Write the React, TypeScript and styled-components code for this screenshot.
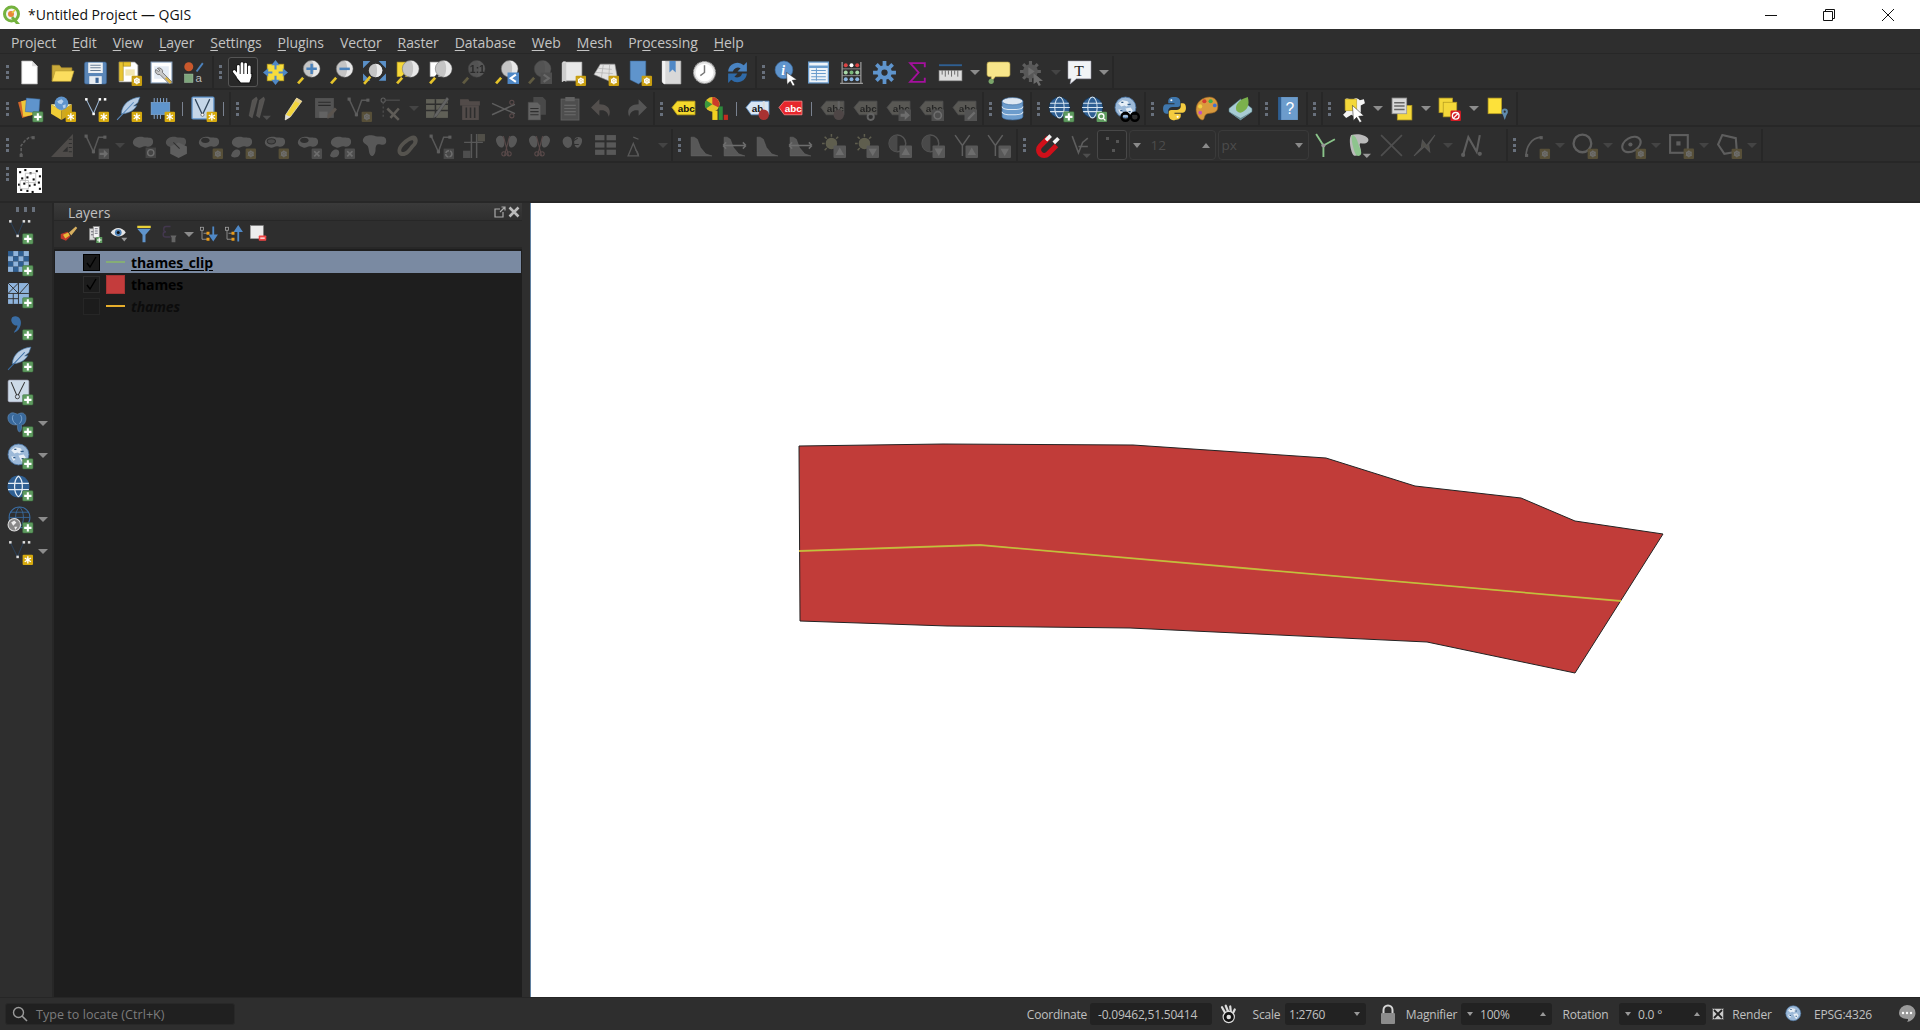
import React, { ReactNode } from "react";
import styled, { createGlobalStyle } from "styled-components";

const GlobalStyle = createGlobalStyle`
  html, body {
    margin: 0;
    padding: 0;
    background: #2e2e2e;
    overflow: hidden;
  }
  body {
    font-family: "Open Sans", "Liberation Sans", sans-serif;
  }
`;

const Window = styled.div`
  width: 1920px;
  height: 1030px;
  display: flex;
  flex-direction: column;
`;

const TitleBar = styled.div`
  height: 29px;
  background: #fff;
  display: flex;
  align-items: center;
  padding: 0 3px 0 2px;
  flex: none;
`;

const TitleText = styled.div`
  font-size: 14px;
  color: #111;
  margin-left: 6px;
  flex: 1;
`;

const WinButton = styled.div`
  width: 58.5px;
  height: 29px;
  display: flex;
  align-items: center;
  justify-content: center;
`;

const MenuBar = styled.div`
  height: 25px;
  flex: none;
  display: flex;
  align-items: center;
  padding: 2px 0 0 3px;
  background: #2e2e2e;
  border-bottom: 1px solid #272727;
  box-sizing: border-box;
`;

const MenuItem = styled.div`
  font-size: 14px;
  letter-spacing: -0.08px;
  color: #c4c4c4;
  padding: 0 8px;
  u {
    text-underline-offset: 2px;
  }
`;

const ToolRow = styled.div<{ $h: number }>`
  height: ${(p) => p.$h}px;
  flex: none;
  box-sizing: border-box;
  display: flex;
  align-items: stretch;
  padding-top: 2px;
  background: #2e2e2e;
  border-bottom: 2px solid #272727;
`;

const Group = styled.div`
  display: flex;
  align-items: center;
  padding-right: 1px;
  border-right: 2px solid #272727;
`;

const Handle = styled.div`
  width: 7px;
  margin-left: 5px;
  height: 18px;
  display: flex;
  flex-direction: column;
  justify-content: space-between;
  padding: 2px 0;
  box-sizing: border-box;
  i {
    display: block;
    width: 3px;
    height: 3px;
    background: #68707c;
  }
`;

const Pad = styled.div<{ $w?: number }>`
  width: ${(p) => p.$w ?? 1}px;
  flex: none;
`;

const ToolButton = styled.div<{ $dim?: boolean; $on?: boolean }>`
  width: ${(p) => (p.$on ? 30 : 33)}px;
  height: 30px;
  margin: 0 ${(p) => (p.$on ? 1.5 : 0)}px;
  box-sizing: border-box;
  flex: none;
  display: flex;
  align-items: center;
  justify-content: center;
  ${(p) => p.$on && "background: #282828; border: 1px solid #555; border-radius: 3px;"}
  svg {
    overflow: visible;
    ${(p) => p.$dim && "opacity: 0.3; filter: saturate(0.55);"}
  }
`;

const Drop = styled.div<{ $dim?: boolean; $blank?: boolean; $w?: number }>`
  width: ${(p) => p.$w ?? 15}px;
  flex: none;
  display: flex;
  justify-content: center;
  &::after {
    content: "";
    display: ${(p) => (p.$blank ? "none" : "block")};
    border-left: 5px solid transparent;
    border-right: 5px solid transparent;
    border-top: 5px solid ${(p) => (p.$dim ? "#444" : "#8c8c8c")};
  }
`;

const ThinSep = styled.div`
  width: 8.5px;
  height: 14px;
  flex: none;
  display: flex;
  justify-content: center;
  &::after {
    content: "";
    width: 1px;
    background: #7a8290;
  }
`;

const SnapBox = styled.div`
  width: 30px;
  height: 30px;
  margin-left: 0.5px;
  box-sizing: border-box;
  border: 1px solid #484848;
  border-radius: 3px;
  background: #2a2a2a;
  position: relative;
`;

const SnapDot = styled.i<{ $x: number; $y: number }>`
  position: absolute;
  left: ${(p) => p.$x}px;
  top: ${(p) => p.$y}px;
  width: 3px;
  height: 3px;
  background: #555;
`;

const SpinBox = styled.div<{ $w: number; $ml: number }>`
  width: ${(p) => p.$w}px;
  height: 30px;
  margin-left: ${(p) => p.$ml}px;
  box-sizing: border-box;
  border: 1px solid #3a3a3a;
  border-radius: 4px;
  display: flex;
  align-items: center;
  justify-content: space-between;
  padding: 0 5px 0 3px;
  font-size: 13.5px;
  color: #4c4c4c;
  flex: none;
`;

const SpinValue = styled.span<{ $pl: number }>`
  flex: 1;
  padding-left: ${(p) => p.$pl}px;
`;

const Tri = styled.span<{ $up?: boolean }>`
  display: block;
  border-left: 4px solid transparent;
  border-right: 4px solid transparent;
  ${(p) =>
    p.$up
      ? "border-bottom: 5px solid #8a8a8a;"
      : "border-top: 5px solid #8a8a8a;"}
`;

const Main = styled.div`
  flex: 1;
  min-height: 0;
  display: flex;
`;

const SideBar = styled.div`
  width: 54px;
  flex: none;
  padding-top: 2px;
  box-sizing: border-box;
  background: #2e2e2e;
  border-right: 2px solid #272727;
  display: flex;
  flex-direction: column;
`;

const SideHandle = styled.div`
  height: 7px;
  margin-bottom: 2px;
  padding-left: 16px;
  display: flex;
  gap: 5px;
  i {
    display: block;
    width: 3px;
    height: 5px;
    margin-top: 2px;
    background: #68707c;
  }
`;

const SideRow = styled.div`
  height: 32.2px;
  display: flex;
  align-items: center;
  padding-left: 3px;
  flex: none;
`;

const SideIcon = styled.div`
  width: 32px;
  display: flex;
  justify-content: center;
  svg {
    overflow: visible;
  }
`;

const Panel = styled.div`
  width: 468px;
  flex: none;
  display: flex;
  flex-direction: column;
  background: #2e2e2e;
`;

const PanelTitle = styled.div`
  height: 18px;
  box-sizing: border-box;
  display: flex;
  align-items: center;
  gap: 2px;
  padding: 1px 2px 0 14px;
  background: linear-gradient(#3a3a3a, #2f2f2f);
  border-bottom: 1px solid #272727;
  font-size: 14px;
  color: #c0c0c0;
`;

const PanelName = styled.div`
  flex: 1;
`;

const PanelBar = styled.div`
  height: 28px;
  display: flex;
  align-items: center;
  padding-left: 2px;
  flex: none;
  border-bottom: 2px solid #272727;
  box-sizing: border-box;
`;

const PanelTool = styled.div<{ $dim?: boolean; $w?: number }>`
  width: ${(p) => p.$w ?? 25}px;
  display: flex;
  justify-content: center;
  flex: none;
  svg {
    overflow: visible;
    ${(p) => p.$dim && "opacity: 0.35;"}
  }
`;

const Tree = styled.div`
  flex: 1;
  background: #1e1e1e;
  padding: 2px 1px 0;
`;

const LayerRow = styled.div<{ $on?: boolean }>`
  height: 22px;
  display: flex;
  align-items: center;
  padding-left: 28px;
  background: ${(p) => (p.$on ? "#7a8aa2" : "transparent")};
`;

const Check = styled.div<{ $on?: boolean; $off?: boolean }>`
  width: 17px;
  height: 17px;
  box-sizing: border-box;
  display: flex;
  align-items: center;
  justify-content: center;
  border: 1px solid ${(p) => (p.$on ? "#000" : p.$off ? "#262626" : "#2c2c2c")};
  background: ${(p) => (p.$on ? "#1a1a1a" : "#1c1c1c")};
`;

const Symbol = styled.div`
  width: 19px;
  height: 19px;
  margin: 0 6px;
  display: flex;
  align-items: center;
  flex: none;
`;

const LineSwatch = styled.div<{ $color: string }>`
  width: 100%;
  height: 2px;
  background: ${(p) => p.$color};
`;

const FillSwatch = styled.div`
  width: 100%;
  height: 100%;
  box-sizing: border-box;
  background: #c43c3c;
  border: 1px solid #a83434;
`;

const LayerName = styled.div<{ $on?: boolean; $off?: boolean }>`
  font-size: 14px;
  font-weight: 700;
  color: ${(p) => (p.$off ? "#0c0c0c" : "#000")};
  font-style: ${(p) => (p.$off ? "italic" : "normal")};
  text-decoration: ${(p) => (p.$on ? "underline" : "none")};
  text-underline-offset: 2px;
  letter-spacing: -0.1px;
`;

const Gutter = styled.div`
  width: 8px;
  flex: none;
  background: #2e2e2e;
`;

const MapCanvas = styled.div`
  flex: 1;
  background: #fff;
  border-left: 1px solid #5f7f9f;
  display: flex;
  svg {
    display: block;
  }
`;

const StatusBar = styled.div`
  height: 33px;
  flex: none;
  display: flex;
  align-items: center;
  padding-left: 5px;
  background: #2e2e2e;
  border-top: 1px solid #262626;
  box-sizing: border-box;
  font-size: 12px;
  letter-spacing: -0.2px;
  color: #c0c0c0;
`;

const Locator = styled.div`
  width: 230px;
  height: 22px;
  flex: none;
  display: flex;
  align-items: center;
  gap: 8px;
  padding-left: 6px;
  box-sizing: border-box;
  background: #202020;
  border: 1px solid #282828;
  border-radius: 3px;
  color: #7c7c7c;
  font-size: 12.5px;
  letter-spacing: 0.05px;
`;

const Spacer = styled.div`
  flex: 1;
`;

const StatusLabel = styled.div<{ $w: number }>`
  width: ${(p) => p.$w}px;
  flex: none;
  text-align: center;
  white-space: nowrap;
`;

const StatusField = styled.div<{ $w: number; $pad?: number }>`
  width: ${(p) => p.$w}px;
  height: 22px;
  flex: none;
  box-sizing: border-box;
  padding: 0 6px 0 ${(p) => p.$pad ?? 6}px;
  display: flex;
  align-items: center;
  justify-content: space-between;
  background: #222;
  border-radius: 3px;
  white-space: nowrap;
`;

const FieldValue = styled.span`
  flex: 1;
  padding-left: 7px;
`;

const StatusIcon = styled.div<{ $w: number; $pl?: number; $pr?: number }>`
  width: ${(p) => p.$w}px;
  flex: none;
  box-sizing: border-box;
  padding: 0 ${(p) => p.$pr ?? 0}px 0 ${(p) => p.$pl ?? 0}px;
  display: flex;
  justify-content: center;
  align-items: center;
`;

const SmallTri = styled.span<{ $up?: boolean }>`
  display: block;
  flex: none;
  border-left: 3px solid transparent;
  border-right: 3px solid transparent;
  ${(p) =>
    p.$up
      ? "border-bottom: 4px solid #999;"
      : "border-top: 4px solid #999;"}
`;

/* icon parts */
const star = (
  <g>
    <rect x="15" y="15" width="10" height="10" rx="1" fill="#d6aa0e" />
    <path d="M20 16.5v7M17 18.2l6 3.6M23 18.2l-6 3.6" stroke="#fff" strokeWidth="1.3" />
  </g>
);
const gearB = (
  <g>
    <rect x="15" y="15" width="10" height="10" rx="1" fill="#c89e10" />
    <circle cx="20" cy="20" r="2.2" fill="none" stroke="#fff" strokeWidth="1.2" />
    <path d="M20 16.5v7M17 18.2l6 3.6M23 18.2l-6 3.6" stroke="#fff" strokeWidth="0.8" />
  </g>
);
const plus = (
  <g>
    <rect x="15" y="15" width="10" height="10" rx="1" fill="#5f9c60" stroke="#3a6a3c" strokeWidth=".5" />
    <path d="M20 16.5v7M16.5 20h7" stroke="#fff" strokeWidth="2" />
  </g>
);
const crossB = (
  <g>
    <rect x="15" y="15" width="10" height="10" rx="1" fill="#999" />
    <path d="M17.5 17.5l5 5M22.5 17.5l-5 5" stroke="#fff" strokeWidth="1.6" />
  </g>
);
const blob = "M2 8c1-4 7-5 10-4s8-1 9 3-2 7-6 6-5 2-8 1-6-3-5-6z";
const lens = (extra?: ReactNode, fill = "#c4c4c4", hi = "#e8e8e8") => (
  <>
    <path d="M2 22.5l5-5.5" stroke="#e6c42a" strokeWidth="2.6" />
    <path d="M7 17l2.5-2.7" stroke="#333" strokeWidth="2.6" />
    <circle cx="15" cy="8.5" r="8" fill={fill} stroke="#777" strokeWidth=".6" />
    <path d="M15 .8a7.7 7.7 0 0 1 0 15.4c3-2 3.5-13 0-15.4z" fill={hi} />
    {extra}
  </>
);
const corners = (c: string) => (
  <path d="M1 1h7L1 8zM23 1v7l-7-7zM1 20v-7l7 7zM23 20h-7l7-7z" fill={c} />
);
const globe = (body = "#2f5f92", line = "#d8e6f2", hole = "#17324d") => (
  <>
    <circle cx="11" cy="11" r="10" fill={body} stroke={hole} strokeWidth=".8" />
    <ellipse cx="11" cy="11" rx="4.5" ry="10" fill="none" stroke={line} strokeWidth="1" />
    <path d="M2 7h18M1 11h20M2 15h18" stroke={line} strokeWidth="1" />
  </>
);
const mottled = (
  <>
    <circle cx="11" cy="11" r="10" fill="#9cb9d8" stroke="#4d78a8" strokeWidth=".8" />
    <path d="M4 7l4-3 5 1 2 3-3 2-2-1-3 1zM11 12l5-1 2 3-3 5-2-3zM4 13l3 0 1 3-2 1z" fill="#e6eef6" />
    <path d="M7 6h2M13 8h3M6 14h2M14 15h2" stroke="#2f5a88" strokeWidth="1.2" />
  </>
);
const binoculars = (
  <g>
    <circle cx="11" cy="20" r="3.8" fill="none" stroke="#000" strokeWidth="2.4" />
    <circle cx="20" cy="20" r="3.8" fill="none" stroke="#000" strokeWidth="2.4" />
    <path d="M9 15h4l1 3h3l1-3h4l1 3H8z" fill="#000" />
  </g>
);
const vertexEdge = (c: string, dot: string) => (
  <>
    <path d="M3 3l7 14 6-14" fill="none" stroke={c} strokeWidth="1" />
    <rect x="2" y="2" width="2.4" height="2.4" fill={dot} />
    <rect x="9" y="16" width="2.4" height="2.4" fill={dot} />
    <rect x="15" y="2" width="2.4" height="2.4" fill={dot} />
    <rect x="20" y="2" width="2.4" height="2.4" fill={dot} />
  </>
);
const polyline = (
  <>
    <path d="M3 3l7 15 5-14h7" fill="none" stroke="#bbb" strokeWidth="1.4" />
    <rect x="1.5" y="1.5" width="3" height="3" fill="#ccc" />
    <rect x="8.5" y="16.5" width="3" height="3" fill="#ccc" />
    <rect x="19.5" y="2.5" width="3" height="3" fill="#ccc" />
  </>
);
const feather = (c: string, v: string) => (
  <>
    <path d="M23 1C14 2 6 7 5 17c5 0 12-2 15-8l-3 .5 4-3z" fill={c} stroke="#3d6d9c" strokeWidth=".6" />
    <path d="M1 23L17 6" stroke={v} strokeWidth="1" />
  </>
);
const label = (fill: string, ink: string, edge: string, t = "abc") => (
  <>
    <path d="M1 11l5-6h17v13H6z" fill={fill} stroke={edge} strokeWidth=".8" />
    <text x="6.5" y="15" fontSize="9.5" fontWeight="700" fontFamily="Liberation Sans" fill={ink}>
      {t}
    </text>
  </>
);
const dimLabel = (extra: ReactNode) => (
  <>
    {label("#bfbba0", "#111", "#999")}
    {extra}
  </>
);
const hist = (
  <path d="M2 22V4h3l3 2 3 8 5 6 6 2z" fill="#bbb" stroke="#ddd" strokeWidth=".5" />
);
const histArrow = (
  <>
    {hist}
    <path d="M1 12h22M1 12l3-3M1 12l3 3M23 12l-3-3M23 12l-3 3" stroke="#fff" strokeWidth="1.4" fill="none" />
  </>
);
const bright = (up: boolean) => (
  <>
    <circle cx="10" cy="10" r="5.5" fill="#d8d070" />
    <path d="M10 1v2.5M1 10h2.5M3.5 3.5l2 2M16.5 3.5l-2 2M3.5 16.5l2-2" stroke="#d8d070" strokeWidth="1.4" />
    <rect x="12" y="12" width="12" height="12" rx="1" fill="#bbb" />
    <path d={up ? "M18 14l4 7h-8z" : "M18 22l4-7h-8z"} fill="#fff" />
  </>
);
const contrast = (up: boolean) => (
  <>
    <circle cx="10" cy="10" r="8" fill="#2e2e2e" stroke="#aaa" strokeWidth="1.4" />
    <path d="M10 2a8 8 0 0 0 0 16z" fill="#888" />
    <rect x="12" y="12" width="12" height="12" rx="1" fill="#bbb" />
    <path d={up ? "M18 14l4 7h-8z" : "M18 22l4-7h-8z"} fill="#fff" />
  </>
);
const gamma = (up: boolean) => (
  <>
    <path d="M2 2l7 10v10M16 2l-7 10" fill="none" stroke="#ccc" strokeWidth="1.4" />
    <rect x="12" y="12" width="12" height="12" rx="1" fill="#bbb" />
    <path d={up ? "M18 14l4 7h-8z" : "M18 22l4-7h-8z"} fill="#fff" />
  </>
);
const kidney = (
  <>
    <path d="M3 4c3-3 7-1 7 3s0 7-3 7-7-7-4-10zM21 4c-3-3-7-1-7 3s0 7 3 7 7-7 4-10z" fill="#bbb" />
    <path d="M9 3l5 19M15 3l-5 19" stroke="#e08080" strokeWidth="1" />
    <circle cx="9.5" cy="20" r="2" fill="none" stroke="#e08080" />
    <circle cx="14.5" cy="20" r="2" fill="none" stroke="#e08080" />
  </>
);

const icons: Record<string, ReactNode> = {
  new: (
    <>
      <path d="M4.5 1h10l5 5v17h-15z" fill="#fff" stroke="#b5b5b5" strokeWidth=".7" />
      <path d="M14.5 1v5h5z" fill="#ddd" />
    </>
  ),
  open: (
    <>
      <path d="M2 20V5h7l2 2.5h10V12H5z" fill="#c9a93a" stroke="#a98c2c" strokeWidth=".6" />
      <path d="M2 20.5l3-10h18l-3 10z" fill="#fbdd5e" stroke="#bba032" strokeWidth=".6" />
    </>
  ),
  save: (
    <>
      <rect x="1.5" y="2" width="21" height="21" rx="1.5" fill="#5a86b8" stroke="#3c6494" strokeWidth=".6" />
      <rect x="5" y="2.5" width="14" height="10" fill="#eef1f4" />
      <path d="M7 5h10M7 7.5h10M7 10h10" stroke="#6a7f96" strokeWidth="1" />
      <rect x="6" y="15.5" width="12" height="7.5" fill="#e8edf2" />
      <rect x="12" y="17" width="3" height="5" fill="#3c6494" />
    </>
  ),
  saveAs: (
    <>
      <path d="M3 2h15l3 3v16H3z" fill="#fff" stroke="#999" strokeWidth=".7" />
      <path d="M3 2h4v18H3zM7 2h7v4H7z" fill="#e8c430" stroke="#9c8420" strokeWidth=".5" />
      <path d="M9 9h9v6H9z" fill="#f2e6b0" />
      {gearB}
    </>
  ),
  props: (
    <>
      <rect x="2" y="2" width="20" height="20" fill="#fff" stroke="#8ea6c4" strokeWidth="1" />
      <path d="M5 6h14v12H5z" fill="#e4ebf4" />
      <path d="M8 8a3.5 3.5 0 0 1 5 4l9 9-2.5 2-9-9a3.5 3.5 0 0 1-4-5l2.5 2 1.5-1z" fill="#c8c8c8" stroke="#555" strokeWidth=".7" />
      <path d="M16 17l5 5" stroke="#d6b040" strokeWidth="2.2" />
    </>
  ),
  style: (
    <>
      <circle cx="6.5" cy="6.5" r="4.3" fill="#c9582c" />
      <path d="M14 11l6-8" stroke="#4c82bc" strokeWidth="1.8" />
      <rect x="2.5" y="13.5" width="8" height="8" fill="#7ea67c" stroke="#aac8a8" strokeWidth=".5" />
      <text x="13" y="21" fontSize="11" fontFamily="Liberation Sans" fill="#bbb">
        a
      </text>
    </>
  ),
  hand: (
    <>
      <g strokeLinecap="round" fill="none" stroke="#111" strokeWidth="4">
        <path d="M8 14V6M11.5 12V3.5M15 12V4M18.5 13V6.5M8 15L4 11" />
      </g>
      <path d="M6 13h15v3l-2 6H10l-4-5z" fill="#fff" stroke="#111" />
      <g strokeLinecap="round" fill="none" stroke="#fff" strokeWidth="2.6">
        <path d="M8 15V6M11.5 15V3.5M15 15V4M18.5 15V6.5M8 16L4 11" />
      </g>
    </>
  ),
  panSel: (
    <>
      <rect x="4" y="4" width="16" height="16" fill="#f6dc3c" stroke="#b39a20" strokeWidth=".6" />
      <path d="M12 0l4 5h-3v4h-2V5H8zM12 24l4-5h-3v-4h-2v4H8zM0 12l5-4v3h4v2H5v3zM24 12l-5-4v3h-4v2h4v3z" fill="#4f88c6" />
    </>
  ),
  zoomIn: lens(<path d="M15 3.5v10M10 8.5h10" stroke="#4a82bc" strokeWidth="2.4" />),
  zoomOut: lens(<path d="M10 8.5h10" stroke="#4a82bc" strokeWidth="2.4" />),
  zoomFull: (
    <>
      {corners("#5a90c8")}
      <circle cx="13" cy="10" r="6.5" fill="#c4c4c4" />
      <path d="M13 3.5a6.5 6.5 0 0 1 0 13c2-2 2-11 0-13z" fill="#eaeaea" />
      <path d="M2 23l6-7" stroke="#e6c42a" strokeWidth="2.5" />
    </>
  ),
  zoomSel: (
    <>
      <rect x="2" y="2" width="10" height="14" fill="#f6d83a" stroke="#b89c20" strokeWidth=".6" />
      {lens()}
    </>
  ),
  zoomLayer: (
    <>
      <rect x="2" y="2" width="10" height="14" fill="#fff" stroke="#aaa" strokeWidth=".6" />
      {lens()}
    </>
  ),
  native: lens(
    <text x="8.5" y="12.5" fontSize="10" fontWeight="700" fontFamily="Liberation Sans" fill="#222">
      1:1
    </text>,
    "#aaa",
    "#bbb"
  ),
  last: (
    <>
      {lens()}
      <rect x="13" y="12" width="11" height="11" fill="#4f88c6" />
      <path d="M21 14l-5 3.5 5 3.5" stroke="#fff" strokeWidth="2" fill="none" />
    </>
  ),
  next: (
    <>
      {lens(undefined, "#aaa", "#bbb")}
      <rect x="13" y="12" width="11" height="11" fill="#999" />
      <path d="M16 14l5 3.5-5 3.5" stroke="#eee" strokeWidth="2" fill="none" />
    </>
  ),
  newMap: (
    <>
      <path d="M2 3c0-1.5 3-2 4-1h15v18H6c-2-1-3 0-4 1z" fill="#e8e8e8" stroke="#aaa" strokeWidth=".6" />
      <path d="M2 3v18c1-1 3-1 4 0V2z" fill="#ccc" />
      {gearB}
    </>
  ),
  new3d: (
    <>
      <path d="M1 14L7 4h14l2 11-8 5z" fill="#e2e2e2" stroke="#999" strokeWidth=".6" />
      <path d="M5 8l13 1M3 12l16 1M10 4l-2 13M16 4l-1 15" stroke="#aaa" strokeWidth=".6" />
      {gearB}
    </>
  ),
  newBm: (
    <>
      <path d="M4 1h15v17l-7 5-8-4z" fill="#5f94cc" stroke="#3c6ca0" strokeWidth=".5" />
      {gearB}
    </>
  ),
  showBm: (
    <>
      <path d="M3 1h18v22H5c-1.5-1-2-2-2-3z" fill="#d8d8d8" stroke="#aaa" strokeWidth=".6" />
      <path d="M3 1h3v22c-2 0-3-1-3-3z" fill="#f2f2f2" />
      <path d="M10 1h6v11l-3-3-3 3z" fill="#4f88c6" />
    </>
  ),
  clock: (
    <>
      <circle cx="12" cy="12" r="10.5" fill="#e6e6e6" stroke="#999" strokeDasharray="2 .6" />
      <circle cx="12" cy="12" r="8.5" fill="#fff" />
      <path d="M12 5v7l-4 3" fill="none" stroke="#777" strokeWidth="1.4" />
    </>
  ),
  refresh: (
    <>
      <path d="M3 11a9 9 0 0 1 15-6l3-3v9h-9l3-3a5 5 0 0 0-7.5 3z" fill="#4a84c2" />
      <path d="M21 13a9 9 0 0 1-15 6l-3 3v-9h9l-3 3a5 5 0 0 0 7.5-3z" fill="#2f6aa8" />
    </>
  ),
  identify: (
    <>
      <circle cx="10.5" cy="9.5" r="8.5" fill="#5f94cc" stroke="#3c6ca0" strokeWidth=".6" />
      <text x="8" y="14.5" fontSize="13" fontWeight="700" fontStyle="italic" fontFamily="Liberation Serif" fill="#fff">
        i
      </text>
      <path d="M13 12l10 7-4.5 .5 2.5 4.5-2 1-2.5-4.5-3 3z" fill="#fff" stroke="#222" strokeWidth=".5" />
    </>
  ),
  attr: (
    <>
      <rect x="2.5" y="2" width="19" height="20" fill="#eef3f8" stroke="#6a9ccc" strokeWidth="1.2" />
      <path d="M3 6.5h18" stroke="#6a9ccc" strokeWidth="2.4" />
      <path d="M5 10h14M5 13h14M5 16h14M5 19h14M10 8v12" stroke="#6a9ccc" strokeWidth="1" />
    </>
  ),
  stat: (
    <>
      <path d="M3 2v20M21 2v20M1 22.5h22" stroke="#999" strokeWidth="1.2" />
      <path d="M3 8.5h18M3 15h18" stroke="#999" strokeWidth=".8" />
      {[6.5, 12, 17.5].map((x) => (
        <g key={x}>
          <circle cx={x} cy="5" r="1.9" fill={x === 12 ? "#fff" : "#d44"} />
          <circle cx={x} cy="12" r="1.9" fill={x === 12 ? "#7ab87a" : "#a8d8a8"} />
          <circle cx={x} cy="18.5" r="1.9" fill="#8ab4e0" />
        </g>
      ))}
    </>
  ),
  gear: (
    <>
      <path d="M12 1v22M1 12h22M4.2 4.2l15.6 15.6M19.8 4.2L4.2 19.8" stroke="#5f94cc" strokeWidth="3.6" />
      <circle cx="12" cy="12" r="7" fill="#5f94cc" />
      <circle cx="12" cy="12" r="3" fill="#2e2e2e" />
    </>
  ),
  sigma: <path d="M19 7V3H5l8 9-8 9h14v-4" fill="none" stroke="#a5109e" strokeWidth="1.8" />,
  ruler: (
    <>
      <path d="M1 5h22" stroke="#2f5f92" strokeWidth="1.8" />
      <rect x="1" y="10" width="22" height="10" fill="#ddd" stroke="#888" strokeWidth=".6" />
      <path d="M4 10v4M7 10v6M10 10v4M13 10v6M16 10v4M19 10v6" stroke="#555" strokeWidth=".8" />
    </>
  ),
  tips: (
    <>
      <path d="M4 2h17a2 2 0 0 1 2 2v10a2 2 0 0 1-2 2H9l-4 5v-5H3a2 2 0 0 1-2-2V4a2 2 0 0 1 2-2z" fill="#f8e68a" stroke="#bda94c" strokeWidth=".6" />
      <circle cx="5" cy="20.5" r="2.5" fill="#7aa56a" />
    </>
  ),
  action: (
    <>
      <path d="M11 1v20M1 11h20M4 4l14 14M18 4L4 18" stroke="#ccc" strokeWidth="3" />
      <circle cx="11" cy="11" r="7" fill="#bbb" />
      <path d="M9 7l6 4-6 4z" fill="#fff" />
      <path d="M14 13l9 7-4 .5 2 3.5-2 1-2-4-3 2z" fill="#fff" />
    </>
  ),
  text: (
    <>
      <path d="M1 1h22v17H9l-6 5 1-5H1z" fill="#f2f4f6" stroke="#aab" strokeWidth=".5" />
      <text x="7" y="15" fontSize="15" fontFamily="Liberation Serif" fill="#222">
        T
      </text>
    </>
  ),
  addLayer: (
    <>
      <path d="M1 6l10-3 4 15-10 3z" fill="#d2662a" />
      <path d="M4 5l10-2 2 15-10 2z" fill="#eec83a" />
      <path d="M9 2l13 1-1 13-13-1z" fill="#5f94cc" stroke="#3c6ca0" strokeWidth=".5" />
      {plus}
    </>
  ),
  newGpkg: (
    <>
      <path d="M1 8l10 6v9L1 17z" fill="#f0cc36" />
      <path d="M11 14l10-6v9l-10 6z" fill="#cfa820" />
      <path d="M1 8l10 6 10-6" fill="#fff2a8" />
      <circle cx="11" cy="7" r="6.5" fill="#5f94cc" />
      <path d="M7 5l4-2 2 2-2 3-3-1zM12 9l3-1 0 3-2 1z" fill="#b6d0ec" />
      {star}
    </>
  ),
  newShape: (
    <>
      {vertexEdge("#9bb6d4", "#fff")}
      {star}
    </>
  ),
  feather: (
    <>
      {feather("#b8cde4", "#5a8cc0")}
      {star}
    </>
  ),
  mesh: (
    <>
      <rect x="2" y="6" width="18" height="12" fill="#5f94cc" stroke="#8ab0dc" strokeWidth=".5" />
      <path d="M5 2v4M8 2v4M11 2v4M14 2v4M17 2v4M5 18v4M8 18v4M11 18v4" stroke="#8ab0dc" strokeWidth=".9" />
      {star}
    </>
  ),
  newVirtual: (
    <>
      <rect x="1" y="1" width="21" height="21" rx="1" fill="#c5d6e8" stroke="#5f94cc" strokeWidth="1.2" />
      <path d="M4 3l7 15 7-15" fill="none" stroke="#33475c" strokeWidth="1.2" />
      <circle cx="11" cy="18" r="1.5" fill="#fff" stroke="#333" strokeWidth=".5" />
      {star}
    </>
  ),
  multiEdit: (
    <>
      <path d="M5 4l4-3 1 2-5 18-3-2zM12 4l4-3 1 2-5 18-3-2z" fill="#b5a89a" stroke="#eee" strokeWidth=".3" />
      <path d="M15 19h8l-4 4z" fill="#999" />
    </>
  ),
  pencil: (
    <>
      <path d="M16 2l5 3-11 15-5 3 .5-5z" fill="#f2d43c" stroke="#eee" strokeWidth=".6" />
      <path d="M16 2l5 3-2 2.5-5-3z" fill="#e8d088" />
      <path d="M5.5 18l4.5 2-5 3z" fill="#ddd" />
    </>
  ),
  saveEdit: (
    <>
      <rect x="2" y="2" width="18" height="19" fill="#aaa" />
      <path d="M5 6h12M5 9h12" stroke="#222" strokeWidth="1" />
      <rect x="6" y="15" width="8" height="6" fill="#ddd" />
      <path d="M14 22l3-2 6-7-2-2-7 7z" fill="#cfa888" />
    </>
  ),
  vertexTool: (
    <>
      {polyline}
      {gearB}
    </>
  ),
  digit: (
    <>
      <circle cx="4" cy="4" r="2" fill="none" stroke="#ccc" />
      <path d="M6 4h14" stroke="#aaa" />
      <path d="M4 6v14" stroke="#aaa" strokeDasharray="2 2" />
      <path d="M8 12l11 11M11 21l8-9" stroke="#d8c8a8" strokeWidth="2.4" />
    </>
  ),
  tableEdit: (
    <>
      <rect x="1" y="3" width="21" height="18" fill="#d8d4a0" />
      <path d="M1 8h21M1 14h21M10 3v18" stroke="#2e2e2e" strokeWidth="1.4" />
      <path d="M21 1l2 2-12 17-3 1 1-3z" fill="#ddd" stroke="#555" strokeWidth=".4" />
    </>
  ),
  trash: (
    <>
      <path d="M2 3h8l1 2h10v4H2z" fill="#b58a80" />
      <rect x="4" y="9" width="16" height="14" fill="#b58a80" />
      <path d="M8 11v10M12 11v10M16 11v10" stroke="#2e2e2e" strokeWidth="1.5" />
    </>
  ),
  cut: (
    <>
      <path d="M1 7l22 10M1 18L23 8" stroke="#ccc" strokeWidth="1.4" />
      <circle cx="20" cy="6" r="2" fill="none" stroke="#e08080" />
      <circle cx="20" cy="19" r="2" fill="none" stroke="#e08080" />
    </>
  ),
  copy: (
    <>
      <path d="M9 1h9l3 3v14H9z" fill="#888" />
      <path d="M4 6h9l3 3v14H4z" fill="#ddd" stroke="#888" strokeWidth=".5" />
      <path d="M6 12h8M6 15h8M6 18h8" stroke="#333" />
    </>
  ),
  paste: (
    <>
      <rect x="4" y="3" width="17" height="20" fill="#999" stroke="#ccc" />
      <rect x="8" y="1" width="9" height="4" fill="#ddd" />
      <path d="M7 9h11M7 12h11M7 15h11M7 18h11" stroke="#eee" />
    </>
  ),
  undo: <path d="M9 3L1 11l8 8v-5c5-1 8 1 9 6 3-7-1-12-9-12z" fill="#b09a90" />,
  redo: <path d="M15 3l8 8-8 8v-5c-5-1-8 1-9 6-3-7 1-12 9-12z" fill="#b0b0b0" />,
  labelYellow: label("#f4d82c", "#111", "#c4a818"),
  diagram: (
    <>
      <circle cx="8" cy="8" r="7" fill="#e2c42a" />
      <path d="M8 8V1a7 7 0 0 1 6 10z" fill="#cc3a2a" />
      <path d="M8 8L2 12a7 7 0 0 1 0-8z" fill="#3c9a3c" />
      <rect x="8" y="14" width="5" height="9" fill="#f0d020" />
      <rect x="14" y="10" width="4" height="13" fill="#2e8a3c" />
      <rect x="19" y="18" width="4" height="5" fill="#c42c20" />
    </>
  ),
  labelPin: (
    <>
      {label("#d8e6f4", "#111", "#5f94cc", "ab")}
      <path d="M17 5h2v8h-2z" fill="#ddd" />
      <circle cx="18" cy="18" r="5" fill="#a83232" />
    </>
  ),
  labelRed: label("#e8262c", "#fff", "#ff8888"),
  labelPinDim: dimLabel(
    <>
      <path d="M17 5h2v8h-2z" fill="#ddd" />
      <circle cx="18" cy="18" r="5" fill="#a87a7a" />
    </>
  ),
  labelSpin: dimLabel(<circle cx="17" cy="20" r="3" fill="none" stroke="#ddd" strokeWidth="1.8" />),
  labelMove: dimLabel(
    <>
      <rect x="12" y="13" width="12" height="11" fill="#999" />
      <path d="M14 17h4v-3l5 4.5-5 4.5v-3h-4z" fill="#fff" />
    </>
  ),
  labelRotate: dimLabel(
    <>
      <rect x="12" y="13" width="12" height="11" fill="#999" />
      <circle cx="18" cy="18.5" r="3.5" fill="none" stroke="#fff" strokeWidth="1.5" />
    </>
  ),
  labelEdit: dimLabel(
    <>
      <rect x="12" y="13" width="12" height="11" fill="#aaa" />
      <path d="M21 15l1.5 1.5-6 6H15v-1.5z" fill="#fff" />
    </>
  ),
  db: (
    <>
      <path d="M2 5v15c0 4 20 4 20 0V5z" fill="#6c9ccc" stroke="#3c6ca0" strokeWidth=".6" />
      <path d="M2 10c0 4 20 4 20 0M2 15c0 4 20 4 20 0" fill="none" stroke="#dfe9f3" strokeWidth="1" />
      <ellipse cx="12" cy="5" rx="10" ry="3.5" fill="#dde7f2" stroke="#3c6ca0" strokeWidth=".6" />
    </>
  ),
  globeAdd: (
    <>
      {globe()}
      {plus}
    </>
  ),
  globeSearch: (
    <>
      {globe()}
      <rect x="15" y="15" width="10" height="10" rx="1" fill="#5f9c60" />
      <circle cx="19.5" cy="19.5" r="2.5" fill="none" stroke="#fff" strokeWidth="1.3" />
      <path d="M21.5 21.5l2 2" stroke="#fff" strokeWidth="1.3" />
    </>
  ),
  globeBino: (
    <>
      {mottled}
      {binoculars}
    </>
  ),
  globeSmall: mottled,
  python: (
    <>
      <path d="M12 1c-5 0-6 2-6 4v2h6v1H4c-2 0-3 2-3 4.5S2 17 4 17h2v-3c0-2 2-3.5 4-3.5h5c2 0 2.5-1 2.5-2.5V5c0-2-2-4-5.5-4z" fill="#3f77ad" />
      <path d="M12 23c5 0 6-2 6-4v-2h-6v-1h8c2 0 3-2 3-4.5S22 7 20 7h-2v3c0 2-2 3.5-4 3.5H9c-2 0-2.5 1-2.5 2.5v3c0 2 2 4.5 5.500 4.500z" fill="#f5cc40" />
      <circle cx="9" cy="4" r="1" fill="#fff" />
      <circle cx="15" cy="20" r="1" fill="#fff" />
    </>
  ),
  palette: (
    <>
      <path d="M14 1C7 1 1 6 1 13c0 6 4 10 6 10 3 0 1-5 5-6 4-1 10 0 10-7 0-5-3-9-8-9z" fill="#d99a3e" stroke="#8a5a20" strokeWidth=".6" />
      <circle cx="9" cy="5" r="2" fill="#d43c30" />
      <circle cx="15" cy="5" r="2" fill="#3cb050" />
      <circle cx="5" cy="10" r="2" fill="#f0d040" />
      <circle cx="19" cy="9" r="1.8" fill="#4070d0" />
      <circle cx="5" cy="16" r="1.8" fill="#c050c0" />
    </>
  ),
  plugin: (
    <>
      <path d="M12 3l11 9v3l-11 8L1 15v-3z" fill="#a8ccd4" stroke="#5e8a94" strokeWidth=".5" />
      <path d="M1 15l11 8 11-8-11 6z" fill="#6a8c94" />
      <path d="M8 14C6 8 12 3 19 1c2 7 0 13-7 15-2 0-3-1-4-2z" fill="#7bb14c" />
    </>
  ),
  help: (
    <>
      <rect x="2" y="1" width="5" height="22" fill="#2f5f92" />
      <rect x="5" y="1" width="16" height="22" fill="#6c9ccc" />
      <text x="9" y="17" fontSize="15" fontFamily="Liberation Sans" fill="#fff">
        ?
      </text>
    </>
  ),
  selectFeat: (
    <>
      <path d="M3 3c3-2 5 2 8 0s5 0 6 1l4-1 1 4-4 2v9l-6 2-3-2-5 3-3-3 3-3z" fill="#f4f4f4" />
      <path d="M3 3h11v11H3z" fill="#f4d83a" stroke="#bba022" strokeWidth=".6" />
      <path d="M10 9l11 10-5 .5 3 5-2 1-3-5-3 3z" fill="#fff" stroke="#222" strokeWidth=".5" />
    </>
  ),
  selectAttr: (
    <>
      <rect x="7" y="9" width="14" height="14" fill="#f4d83a" stroke="#b39a20" strokeWidth=".7" />
      <rect x="2" y="2" width="14" height="15" fill="#d8d8d8" stroke="#999" strokeWidth=".8" />
      <path d="M4 6.5h10M4 9.5h10M4 13h10" stroke="#666" strokeWidth="1.4" />
    </>
  ),
  deselect: (
    <>
      <rect x="1" y="2" width="13" height="14" fill="#f4d83a" stroke="#b39a20" strokeWidth=".7" />
      <rect x="5" y="6" width="13" height="14" fill="#f4d83a" stroke="#b39a20" strokeWidth=".7" />
      <rect x="12" y="14" width="10" height="10" rx="1" fill="#d41c24" />
      <circle cx="17" cy="19" r="3.2" fill="none" stroke="#fff" strokeWidth="1.3" />
      <path d="M15 21l4-4" stroke="#fff" strokeWidth="1.3" />
    </>
  ),
  selectLoc: (
    <>
      <rect x="2" y="2" width="13" height="15" fill="#fde13a" stroke="#b39a20" strokeWidth=".7" />
      <circle cx="18" cy="15" r="3" fill="#5f8aac" />
      <path d="M15.5 16l2.5 7 2.5-7z" fill="#5f8aac" />
      <circle cx="18" cy="15" r="1" fill="#2e2e2e" />
    </>
  ),
  digitCurve: (
    <>
      <path d="M4 22V12l4-5 4-3h2" fill="none" stroke="#ccc" strokeDasharray="3 1.5" strokeWidth="1.5" />
      <rect x="2.5" y="20" width="3" height="3" fill="#ccc" />
      <rect x="14" y="3" width="3" height="3" fill="#ccc" />
    </>
  ),
  triangle: (
    <>
      <path d="M22 1v22H1zM17 13v5h-5z" fill="#9e8f80" fillRule="evenodd" />
      <path d="M18 6h3M18 10h3M18 14h3M18 18h3" stroke="#2e2e2e" />
    </>
  ),
  moveFeat: (
    <>
      {polyline}
      <rect x="15" y="15" width="10" height="10" fill="#999" />
      <path d="M16 19h4v-3l4 4-4 4v-3h-4z" fill="#fff" />
    </>
  ),
  blobRot: (
    <>
      <path d={blob} fill="#bbb" />
      <rect x="14" y="14" width="10" height="10" fill="#777" />
      <circle cx="19" cy="19" r="3" fill="none" stroke="#fff" strokeWidth="1.3" />
    </>
  ),
  hexBlob: (
    <>
      <path d={blob} fill="#aaa" />
      <path d="M14 9l8 4v7l-8 4-8-4v-7z" fill="#ccc" />
      <path d="M9 9l6 6" stroke="#333" />
    </>
  ),
  ringAdd: (
    <>
      <path d={blob} fill="#bbb" />
      <ellipse cx="8" cy="7" rx="4" ry="2.5" fill="#2e2e2e" />
      {gearB}
    </>
  ),
  partAdd: (
    <>
      <path d={blob} fill="#bbb" />
      <path d="M1 22c1-5 4-7 7-6s2 6-1 7-5 0-6-1z" fill="#bbb" />
      {gearB}
    </>
  ),
  ringFill: (
    <>
      <path d={blob} fill="#bbb" />
      <ellipse cx="8" cy="8" rx="4" ry="2.5" fill="#888" stroke="#2e2e2e" />
      {gearB}
    </>
  ),
  ringDel: (
    <>
      <path d={blob} fill="#bbb" />
      <ellipse cx="8" cy="7" rx="4" ry="2.5" fill="#2e2e2e" />
      {crossB}
    </>
  ),
  partDel: (
    <>
      <path d={blob} fill="#bbb" />
      <path d="M1 22c1-5 4-7 7-6s2 6-1 7-5 0-6-1z" fill="#bbb" />
      {crossB}
    </>
  ),
  reshape: (
    <path d="M1 6c2-5 9-4 12-3s9-1 10 3-1 6-5 5-5 1-5 5-3 8-5 5-1-7-3-9-5-3-4-6z" fill="#bbb" />
  ),
  offset: (
    <path d="M20 3c3 3 2 7-1 10s-5 8-10 9-8-3-6-8S16 0 20 3zM17 7c-2-1-8 4-10 7s-1 5 2 4 5-5 7-7 2-3 1-4z" fill="#b5a88a" fillRule="evenodd" />
  ),
  reverse: (
    <>
      {polyline}
      <rect x="15" y="15" width="10" height="10" fill="#888" />
      <circle cx="20" cy="20" r="3" fill="none" stroke="#fff" strokeWidth="1.4" strokeDasharray="4 1" />
    </>
  ),
  trim: (
    <>
      <path d="M3 9h18M10 1v23M15 1v23" stroke="#bbb" strokeWidth="1.4" />
      <rect x="16" y="1" width="7" height="7" fill="#a89c70" />
      <rect x="2" y="17" width="7" height="7" fill="#999" />
    </>
  ),
  splitF: kidney,
  splitP: kidney,
  merge: (
    <>
      <path d="M3 6c2-4 7-3 8 0s1 6-2 8-8-4-6-8zM21 6c-1-3-6-3-7 0s0 7 2 8 6-4 5-8z" fill="#bbb" />
      <path d="M12 8l5-3M12 11h6" stroke="#2e2e2e" />
    </>
  ),
  mergeAttr: (
    <>
      <rect x="2" y="2" width="9" height="5" fill="#bbb" />
      <rect x="13" y="2" width="9" height="5" fill="#bbb" />
      <rect x="2" y="9" width="9" height="5" fill="#bbb" />
      <rect x="13" y="9" width="9" height="5" fill="#bbb" />
      <rect x="2" y="16" width="9" height="5" fill="#bbb" />
      <rect x="13" y="16" width="9" height="5" fill="#bbb" />
    </>
  ),
  rotPoint: (
    <>
      <path d="M2 22h10L7 10zM7 4l5 2" fill="none" stroke="#bbb" strokeWidth="1.2" />
      <path d="M12 22a8 8 0 0 0-3-6" fill="none" stroke="#bbb" />
    </>
  ),
  histA: hist,
  histB: histArrow,
  brUp: bright(true),
  brDown: bright(false),
  coUp: contrast(true),
  coDown: contrast(false),
  gaUp: gamma(true),
  gaDown: gamma(false),
  magnet: (
    <>
      <path d="M14 4.5L6 12.5a5.200 5.200 0 0 0 7.500 7.500L21.500 12" fill="none" stroke="#d0101a" strokeWidth="5" />
      <path d="M11.500 7l4.500-4.500M19 9.500l4.500-4.500" stroke="#f4f4f4" strokeWidth="3.500" />
    </>
  ),
  snapV: (
    <>
      <path d="M5 3l6 16 4-10 5-4M11 13l9 0" fill="none" stroke="#ccc" strokeWidth="1.5" />
      <path d="M15 20h8l-4 4z" fill="#999" />
    </>
  ),
  windmill: (
    <>
      <path d="M10 12L3 1M10 12l11-6M10 12l0 11" stroke="#8ac48a" strokeWidth="1.8" />
      <circle cx="10" cy="12" r="2" fill="#999" />
    </>
  ),
  trace: (
    <>
      <path d="M5 2c6-2 14 0 16 3s-2 6-6 5 0 5-1 8-5 5-7 3-5-15-2-19z" fill="#bbb" />
      <path d="M6 2c4 1 5 6 6 9s4 8 2 10-4 1-5-1-5-15-3-18z" fill="#8ec48e" />
      <path d="M16 20h8l-4 4z" fill="#999" />
    </>
  ),
  xAdv: <path d="M2 2l20 20M22 2L2 22" stroke="#999" strokeWidth="1.6" />,
  xStar: <path d="M2 22l7-8 1-7 4 5 8-10-6 9 1 7-5-5z" fill="#a8a080" stroke="#aaa" />,
  zigzag: (
    <>
      <path d="M3 21L8 4l8 14 3-16" fill="none" stroke="#ccc" strokeWidth="2" />
      <circle cx="3" cy="21" r="2" fill="#ccc" />
      <circle cx="19" cy="20" r="2" fill="#ccc" />
    </>
  ),
  arcAdd: (
    <>
      <path d="M2 22c0-9 5-17 14-18" fill="none" stroke="#ccc" strokeWidth="1.6" />
      <rect x="1" y="20" width="3" height="3" fill="#ccc" />
      <rect x="15" y="3" width="3" height="3" fill="#ccc" />
      {gearB}
    </>
  ),
  circleAdd: (
    <>
      <circle cx="10" cy="10" r="8.5" fill="none" stroke="#ccc" strokeWidth="2.2" />
      {gearB}
    </>
  ),
  ellipseAdd: (
    <>
      <ellipse cx="11" cy="11" rx="9.5" ry="6.5" transform="rotate(-30 11 11)" fill="none" stroke="#ccc" strokeWidth="2" />
      <circle cx="10" cy="11" r="2" fill="#ccc" />
      {gearB}
    </>
  ),
  rectAdd: (
    <>
      <rect x="2" y="2" width="17" height="17" fill="none" stroke="#ccc" strokeWidth="2" />
      <rect x="8" y="8" width="4" height="4" fill="#ccc" />
      {gearB}
    </>
  ),
  polyAdd: (
    <>
      <path d="M6 2l13 3 1 13-12 2-6-9z" fill="none" stroke="#ccc" strokeWidth="2" />
      {gearB}
    </>
  ),
  noise: (
    <>
      <rect x="0" y="0" width="24" height="24" fill="#fff" />
      {[
        [2, 3], [7, 1], [12, 4], [18, 2], [21, 7], [4, 9], [9, 8], [15, 10], [20, 13],
        [1, 15], [6, 14], [11, 16], [16, 15], [3, 20], [9, 21], [14, 22], [21, 19],
      ].map(([x, y]) => (
        <rect key={`${x}-${y}`} x={x} y={y} width="2" height="2" fill="#111" />
      ))}
      <path d="M8 5h10v9H8zM3 12h8v8H3z" fill="none" stroke="#bbb" strokeWidth=".8" />
    </>
  ),
  sideVertex: (
    <>
      {vertexEdge("#2c4058", "#ddd")}
      {plus}
    </>
  ),
  sideRaster: (
    <>
      {[0, 1, 2, 3].map((r) =>
        [0, 1, 2, 3].map((c) => (
          <rect
            key={`${r}-${c}`}
            x={1 + c * 5}
            y={1 + r * 5}
            width="5"
            height="5"
            fill={(r + c) % 2 ? "#8fb4dc" : "#2f5f92"}
          />
        ))
      )}
      {plus}
    </>
  ),
  sideMesh: (
    <>
      <rect x="1" y="1" width="20" height="20" fill="#8fb4dc" />
      <path d="M1 1l10 10M11 1L1 11M21 1L12 11M1 11h20M1 16h10M6 11v10M11 1v20" stroke="#2e2e2e" strokeWidth=".9" />
      {plus}
    </>
  ),
  sideDelim: (
    <>
      <path d="M5 3c5-3 10 2 8 8s-5 6-6 7c-1-1 3-4 3-7-3 1-8-4-5-8z" fill="#3a6da4" />
      {plus}
    </>
  ),
  sideFeather: (
    <>
      {feather("#b8cde4", "#3a6da4")}
      {plus}
    </>
  ),
  sideVirtual: (
    <>
      <rect x="1" y="1" width="20" height="21" rx="1.5" fill="#cddae8" stroke="#99a" strokeWidth=".6" />
      <path d="M4 3l6 14 7-14" fill="none" stroke="#333" strokeWidth="1" />
      <circle cx="10" cy="17" r="2" fill="#cddae8" stroke="#333" strokeWidth=".8" />
      {plus}
    </>
  ),
  sidePg: (
    <>
      <path d="M1 8c-1-5 3-7 6-6l3 1 3-1c4-1 6 3 5 7s-3 4-4 4c0 3 0 7-2 7s-2-5-2-7c-3 1-8 0-9-5z" fill="#39699c" stroke="#6a94c0" strokeWidth=".5" />
      <path d="M6 4c-2 3 0 7 3 9M13 4c2 3 1 6-1 8" fill="none" stroke="#8fb4dc" strokeWidth=".8" />
      {plus}
    </>
  ),
  sideWms: (
    <>
      {mottled}
      {plus}
    </>
  ),
  sideWfs: (
    <>
      <circle cx="11" cy="11" r="10.5" fill="#2f5f92" />
      <path d="M1 8h20M1 14h20M11 1c-5 4-5 16 0 20M11 1c5 4 5 16 0 20" fill="none" stroke="#e4edf5" strokeWidth="1.2" />
      {plus}
    </>
  ),
  sideWcs: (
    <>
      <circle cx="12" cy="10" r="10" fill="none" stroke="#3a6da4" strokeWidth="1" />
      <path d="M2 10h20M12 0c-5 4-5 16 0 20M12 0c5 4 5 16 0 20M3 5h18" stroke="#3a6da4" strokeWidth=".8" fill="none" />
      <g transform="translate(1 11)">
        <circle cx="6" cy="6" r="6" fill="#888" stroke="#ddd" />
        <path d="M3 4l3-2 2 2-3 3zM6 8l3 0-2 3z" fill="#eee" />
      </g>
      {plus}
    </>
  ),
  sideTemp: (
    <>
      {vertexEdge("#2c4058", "#ddd")}
      {star}
    </>
  ),
};

const rows: string[][][] = [
  [
    ["new", "open", "save", "saveAs", "props", "style"],
    [
      "*hand", "panSel", "zoomIn", "zoomOut", "zoomFull", "zoomSel", "zoomLayer", "~native",
      "last", "~next", "newMap", "new3d", "newBm", "showBm", "clock", "refresh",
    ],
    ["identify", "attr", "stat", "gear", "sigma", "ruler", ">", "tips", "~action", "~>", "text", ">"],
  ],
  [
    ["addLayer", "newGpkg", "newShape", "feather", "mesh", "|", "newVirtual", "|"],
    [
      "~multiEdit", "pencil", "~saveEdit", "~vertexTool", "~digit", "~<", "~tableEdit", "~trash",
      "~cut", "~copy", "~paste", "~undo", "~redo",
    ],
    [
      "labelYellow", "diagram", "|", "labelPin", "labelRed", "|", "~labelPinDim", "~labelSpin",
      "~labelMove", "~labelRotate", "~labelEdit",
    ],
    ["db"],
    ["globeAdd", "globeSearch", "globeBino"],
    ["python", "palette", "plugin"],
    ["help"],
    [],
    ["#gap", "selectFeat", ">", "selectAttr", ">", "deselect", ">", "selectLoc"],
  ],
  [
    [
      "~digitCurve", "~triangle", "~moveFeat", "~>", "~blobRot", "~hexBlob", "~ringAdd", "~partAdd",
      "~ringFill", "~ringDel", "~partDel", "~reshape", "~offset", "~reverse", "~trim", "~splitF",
      "~splitP", "~merge", "~mergeAttr", "~rotPoint", "~>",
    ],
    ["~histA", "~histB", "~histA", "~histB", "~brUp", "~brDown", "~coUp", "~coDown", "~gaUp", "~gaDown"],
    ["magnet", "~snapV", "#snap", "#spin", "#combo", "windmill", "trace", "~xAdv", "~xStar", "~>", "~zigzag", "_", "#pad"],
    [
      "~arcAdd", "~>", "~circleAdd", "~>", "~ellipseAdd", "~>", "~rectAdd", "~>", "~polyAdd", "~>",
    ],
  ],
];

const sideItems: [string, boolean][] = [
  ["sideVertex", false],
  ["sideRaster", false],
  ["sideMesh", false],
  ["sideDelim", false],
  ["sideFeather", false],
  ["sideVirtual", false],
  ["sidePg", true],
  ["sideWms", true],
  ["sideWfs", false],
  ["sideWcs", true],
  ["sideTemp", true],
];

const menus: [string, string, string][] = [
  ["Pro", "j", "ect"],
  ["", "E", "dit"],
  ["", "V", "iew"],
  ["", "L", "ayer"],
  ["", "S", "ettings"],
  ["", "P", "lugins"],
  ["Vect", "o", "r"],
  ["", "R", "aster"],
  ["", "D", "atabase"],
  ["", "W", "eb"],
  ["", "M", "esh"],
  ["Pr", "o", "cessing"],
  ["", "H", "elp"],
];

const Ico = ({ name, size = 25 }: { name: string; size?: number }) => (
  <svg width={size} height={size} viewBox="0 0 24 24">
    {icons[name]}
  </svg>
);

const renderItem = (item: string, key: number) => {
  if (item === ">") return <Drop key={key} />;
  if (item === "~>") return <Drop key={key} $dim />;
  if (item === "~<") return <Drop key={key} $dim $w={12.5} />;
  if (item === "_") return <Drop key={key} $blank />;
  if (item === "|") return <ThinSep key={key} />;
  if (item === "#pad") return <Pad key={key} />;
  if (item === "#gap") return <Pad key={key} $w={3} />;
  if (item === "#snap")
    return (
      <SnapBox key={key}>
        <SnapDot $x={8} $y={6} />
        <SnapDot $x={18} $y={9} />
        <SnapDot $x={14} $y={18} />
      </SnapBox>
    );
  if (item === "#spin")
    return (
      <SpinBox key={key} $w={87} $ml={2}>
        <Tri />
        <SpinValue $pl={10}>12</SpinValue>
        <Tri $up />
      </SpinBox>
    );
  if (item === "#combo")
    return (
      <SpinBox key={key} $w={91} $ml={2}>
        <span>px</span>
        <Tri />
      </SpinBox>
    );
  const on = item.startsWith("*");
  const dim = item.startsWith("~");
  const name = on || dim ? item.slice(1) : item;
  return (
    <ToolButton key={key} $on={on} $dim={dim}>
      <Ico name={name} />
    </ToolButton>
  );
};

const Dots = () => (
  <Handle>
    <i />
    <i />
    <i />
  </Handle>
);

const Toolbar = ({ groups, h }: { groups: string[][]; h: number }) => (
  <ToolRow $h={h}>
    <Pad />
    {groups.map((g, gi) => (
      <Group key={gi}>
        <Dots />
        {g.map(renderItem)}
      </Group>
    ))}
  </ToolRow>
);

const QgisLogo = () => (
  <svg width="20" height="20" viewBox="0 0 20 20">
    <circle cx="9.5" cy="9" r="7" fill="#f4f4f4" stroke="#74b23e" strokeWidth="3" />
    <path d="M11 11l7 8h-4l-5-6z" fill="#74b23e" />
    <circle cx="9" cy="9" r="3" fill="#e8853a" />
    <path d="M10 8l3-3" stroke="#e8c93a" strokeWidth="1.6" />
  </svg>
);

const panelIcons: Record<string, ReactNode> = {
  brush: (
    <>
      <path d="M1 12l9-3 4 6-6 6-7-3z" fill="#c0392b" />
      <path d="M4 13l7-3 2 4-6 4z" fill="#e8b93a" />
      <path d="M12 10l9-8 2 2-8 10z" fill="#d8b060" />
    </>
  ),
  group: (
    <>
      <rect x="6" y="5" width="7" height="15" fill="#ddd" stroke="#888" />
      <rect x="11" y="2" width="8" height="15" fill="#f4f4f4" stroke="#888" />
      <path d="M13 5h4M13 8h4M13 11h4M8 9h3M8 13h3" stroke="#445" />
      <rect x="15" y="16" width="8" height="8" fill="#5f9c60" />
      <path d="M19 17v6M16 20h6" stroke="#fff" strokeWidth="1.5" />
    </>
  ),
  eye: (
    <>
      <path d="M1 10c5-8 15-8 20 0-5 7-15 7-20 0z" fill="#e6e6e6" />
      <circle cx="11" cy="10" r="4.5" fill="#4a7fb5" />
      <circle cx="11" cy="10" r="2" fill="#111" />
      <path d="M15 17h8l-4 5z" fill="#999" />
    </>
  ),
  filter: (
    <>
      <rect x="3" y="1" width="18" height="3" fill="#e8d038" />
      <path d="M3 5h18l-7 8v10h-4V13z" fill="#5f94cc" />
    </>
  ),
  eps: (
    <>
      <path d="M14 2H8C4 2 4 9 8 9c-5 0-5 7 0 7h6" fill="none" stroke="#6a4a8a" strokeWidth="1.8" />
      <path d="M14 14h8l-1.5 3v6h-5v-6z" fill="#ccc" />
    </>
  ),
  expand: (
    <>
      <rect x="2" y="3" width="4" height="4" fill="none" stroke="#aaa" />
      <path d="M4 7v12h7M6 11h5" stroke="#aaa" fill="none" />
      <rect x="10" y="9" width="4" height="4" fill="#e89a1a" />
      <rect x="10" y="17" width="4" height="4" fill="#e89a1a" />
      <path d="M19 2v16M15 14l4 6 4-6z" stroke="#4f88c6" strokeWidth="2.4" fill="#4f88c6" />
    </>
  ),
  collapse: (
    <>
      <rect x="2" y="3" width="4" height="4" fill="none" stroke="#aaa" />
      <path d="M4 7v12h7M6 11h5" stroke="#aaa" fill="none" />
      <rect x="10" y="9" width="4" height="4" fill="#e89a1a" />
      <rect x="10" y="17" width="4" height="4" fill="#e89a1a" />
      <path d="M19 22V8M15 8l4-6 4 6z" stroke="#4f88c6" strokeWidth="2.4" fill="#4f88c6" />
    </>
  ),
  remove: (
    <>
      <rect x="2" y="1" width="17" height="17" fill="#ececec" stroke="#bbb" strokeWidth=".5" />
      <rect x="13" y="14" width="10" height="7" rx="1" fill="#e44" />
      <path d="M15 17.5h6" stroke="#fff" strokeWidth="1.6" />
    </>
  ),
};

const statusIcons = {
  hand: (
    <svg width="18" height="20" viewBox="0 0 24 24">
      <path d="M4 3l5 9M9 1l4 10M15 2l1 10M21 6l-4 8" stroke="#ddd" strokeWidth="3" strokeLinecap="round" />
      <circle cx="13" cy="16" r="7.5" fill="#111" stroke="#ddd" strokeWidth="1.5" />
      <circle cx="13" cy="16" r="3" fill="#ddd" />
    </svg>
  ),
  lock: (
    <svg width="16" height="20" viewBox="0 0 16 20">
      <rect x="1" y="9" width="14" height="11" rx="1" fill="#8c8c8c" />
      <path d="M3.5 9V6a4.5 4.5 0 0 1 9 0v3" fill="none" stroke="#d4d4d4" strokeWidth="2" />
    </svg>
  ),
  render: (
    <svg width="12" height="12" viewBox="0 0 12 12">
      <rect x=".5" y=".5" width="11" height="11" fill="#ccc" stroke="#555" />
      <path d="M2 2l8 8M10 2l-8 8" stroke="#222" strokeWidth="1.8" />
    </svg>
  ),
  message: (
    <svg width="20" height="22" viewBox="0 0 20 22">
      <path d="M10 2a8.5 8 0 0 1 8.5 8c0 4-3 8-8.5 9 1-1 1-2 1-3-5 0-9-2-9-6a8.500 8 0 0 1 8-8z" fill="#9a9a9a" />
      <circle cx="6" cy="10" r="1.2" fill="#fff" />
      <circle cx="10" cy="10" r="1.2" fill="#fff" />
      <circle cx="14" cy="10" r="1.2" fill="#fff" />
    </svg>
  ),
  search: (
    <svg width="16" height="16" viewBox="0 0 16 16">
      <circle cx="6.5" cy="6.5" r="5" fill="none" stroke="#9a9a9a" strokeWidth="1.4" />
      <path d="M10 10l5 5" stroke="#9a9a9a" strokeWidth="1.6" />
    </svg>
  ),
};

const PanelIco = ({ name }: { name: string }) => (
  <svg width="18" height="18" viewBox="0 0 24 24">
    {panelIcons[name]}
  </svg>
);

const CheckMark = () => (
  <svg width="13" height="13" viewBox="0 0 13 13">
    <path d="M2 7l3 4 6-10" fill="none" stroke="#000" strokeWidth="1.4" />
  </svg>
);

const App = () => (
  <Window>
    <GlobalStyle />
    <TitleBar>
      <QgisLogo />
      <TitleText>*Untitled Project — QGIS</TitleText>
      <WinButton>
        <svg width="12" height="12" viewBox="0 0 12 12">
          <path d="M0 6.5h12" stroke="#111" />
        </svg>
      </WinButton>
      <WinButton>
        <svg width="12" height="12" viewBox="0 0 12 12">
          <path d="M.5 2.5h9v9h-9zM2.5 2.5v-2h9v9h-2" fill="none" stroke="#111" />
        </svg>
      </WinButton>
      <WinButton>
        <svg width="12" height="12" viewBox="0 0 12 12">
          <path d="M0 0l12 12M12 0L0 12" stroke="#111" />
        </svg>
      </WinButton>
    </TitleBar>

    <MenuBar>
      {menus.map(([a, b, c]) => (
        <MenuItem key={a + b + c}>
          {a}
          <u>{b}</u>
          {c}
        </MenuItem>
      ))}
    </MenuBar>

    <Toolbar groups={rows[0]} h={36} />
    <Toolbar groups={rows[1]} h={37} />
    <Toolbar groups={rows[2]} h={36} />
    <ToolRow $h={40}>
      <Pad />
      <Dots />
      <ToolButton>
        <Ico name="noise" />
      </ToolButton>
    </ToolRow>

    <Main>
      <SideBar>
        <SideHandle>
          <i />
          <i />
          <i />
        </SideHandle>
        {sideItems.map(([name, drop]) => (
          <SideRow key={name}>
            <SideIcon>
              <Ico name={name} />
            </SideIcon>
            {drop && <Drop />}
          </SideRow>
        ))}
      </SideBar>

      <Panel>
        <PanelTitle>
          <PanelName>Layers</PanelName>
          <svg width="12" height="12" viewBox="0 0 12 12">
            <path d="M9 6v5H1V3h5M6 6l5-5M7.5 1H11v3.5" fill="none" stroke="#aaa" strokeWidth="1.2" />
          </svg>
          <svg width="12" height="12" viewBox="0 0 12 12">
            <path d="M1.5 1.5l9 9M10.5 1.5l-9 9" stroke="#bbb" strokeWidth="2.6" />
          </svg>
        </PanelTitle>
        <PanelBar>
          {["brush", "group", "eye", "filter"].map((n) => (
            <PanelTool key={n}>
              <PanelIco name={n} />
            </PanelTool>
          ))}
          <PanelTool $dim>
            <PanelIco name="eps" />
          </PanelTool>
          <Drop />
          <PanelTool $w={24}>
            <PanelIco name="expand" />
          </PanelTool>
          <PanelTool>
            <PanelIco name="collapse" />
          </PanelTool>
          <PanelTool>
            <PanelIco name="remove" />
          </PanelTool>
        </PanelBar>
        <Tree>
          <LayerRow $on>
            <Check $on>
              <CheckMark />
            </Check>
            <Symbol>
              <LineSwatch $color="#85ad76" />
            </Symbol>
            <LayerName $on>thames_clip</LayerName>
          </LayerRow>
          <LayerRow>
            <Check>
              <CheckMark />
            </Check>
            <Symbol>
              <FillSwatch />
            </Symbol>
            <LayerName>thames</LayerName>
          </LayerRow>
          <LayerRow>
            <Check $off />
            <Symbol>
              <LineSwatch $color="#e6ae2c" />
            </Symbol>
            <LayerName $off>thames</LayerName>
          </LayerRow>
        </Tree>
      </Panel>

      <Gutter />

      <MapCanvas>
        <svg width="1389" height="794" viewBox="531 203 1389 794">
          <path
            d="M799 446L943 444L1133 445L1326 458L1415 486L1521 498L1575 521L1663 534L1575 673L1427 642L1130 628L947 626L800 621Z"
            fill="#c13c39"
            stroke="#232323"
            strokeWidth="1"
          />
          <path d="M799 551L980 545L1260 569.5L1621 601" fill="none" stroke="#d29c3e" strokeWidth="1.8" />
          <path d="M799 551L980 545L1260 569.5L1621 601" fill="none" stroke="#b4d43c" strokeWidth=".8" />
        </svg>
      </MapCanvas>
    </Main>

    <StatusBar>
      <Locator>
        {statusIcons.search}
        Type to locate (Ctrl+K)
      </Locator>
      <Spacer />
      <StatusLabel $w={66}>Coordinate</StatusLabel>
      <StatusField $w={122} $pad={8}>-0.09462,51.50414</StatusField>
      <StatusIcon $w={36} $pr={5}>{statusIcons.hand}</StatusIcon>
      <StatusLabel $w={37}>Scale</StatusLabel>
      <StatusField $w={81} $pad={4}>
        1:2760
        <SmallTri />
      </StatusField>
      <StatusIcon $w={36} $pl={7}>{statusIcons.lock}</StatusIcon>
      <StatusLabel $w={59}>Magnifier</StatusLabel>
      <StatusField $w={91}>
        <SmallTri />
        <FieldValue>100%</FieldValue>
        <SmallTri $up />
      </StatusField>
      <StatusLabel $w={67}>Rotation</StatusLabel>
      <StatusField $w={87}>
        <SmallTri />
        <FieldValue>0.0 °</FieldValue>
        <SmallTri $up />
      </StatusField>
      <StatusIcon $w={24}>{statusIcons.render}</StatusIcon>
      <StatusLabel $w={44}>Render</StatusLabel>
      <StatusIcon $w={36} $pl={4}>
        <Ico name="globeSmall" size={18} />
      </StatusIcon>
      <StatusLabel $w={66}>EPSG:4326</StatusLabel>
      <StatusIcon $w={44} $pl={18}>{statusIcons.message}</StatusIcon>
    </StatusBar>
  </Window>
);

export default App;
